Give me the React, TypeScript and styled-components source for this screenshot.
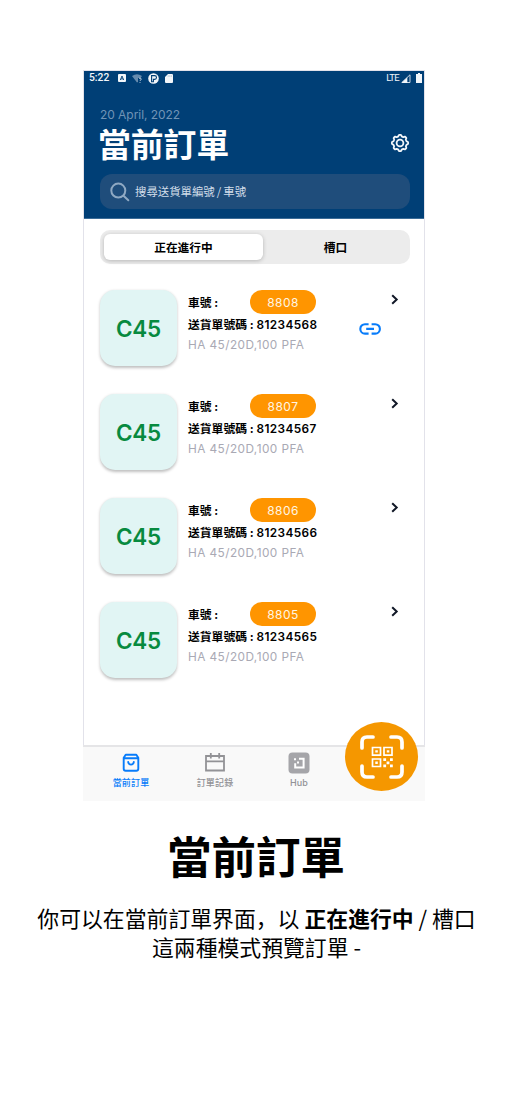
import React from "react";
import styled, { createGlobalStyle } from "styled-components";

const Global = createGlobalStyle`
  * { box-sizing: border-box; }
  body { margin: 0; background: #fff; font-family: Inter, "Noto Sans CJK SC", sans-serif; color: #000; }
`;
const Page = styled.main`
  width: 512px; height: 1108px; padding-top: 70px; overflow: hidden;
  display: flex; flex-direction: column; align-items: center; background: #fff;
`;
const Phone = styled.section`
  position: relative; width: 342px; height: 731px; margin-left: -4px;
  display: flex; flex-direction: column;
`;
const Screen = styled.div`
  height: 675px; border: 1px solid #e2e2ea; border-bottom: 0;
  display: flex; flex-direction: column;
`;
const Header = styled.header`
  height: 148px; background: #003f76; color: #fff; border-bottom: 1px solid #3a6c98;
  display: flex; flex-direction: column; flex: none;
`;
const Status = styled.div`
  height: 15px; padding: 0 2px 1px 5px; display: flex; align-items: center;
  font: 500 10px/14px Roboto, sans-serif; color: #f2f6fa;
  svg { display: block; }
`;
const Clock = styled.span` width: 29px; font-size: 10.3px; `;
const StatusIcons = styled.div` display: flex; align-items: center; gap: 5.5px; flex: 1; `;
const Signal = styled.div` display: flex; align-items: center; font-weight: 400; font-size: 9.5px; letter-spacing: -.7px; `;
const DateLine = styled.div`
  margin: 20px 0 0 16px; height: 16px; line-height: 17px;
  font-size: 12px; letter-spacing: -.05px; color: #7094b6;
`;
const TitleRow = styled.div`
  height: 42px; padding: 0 14px 0 14px; display: flex; justify-content: space-between; align-items: center;
`;
const Title = styled.h1`
  margin: 0; font: 700 32.8px/34px "Noto Sans CJK SC", sans-serif;
`;
const Search = styled.div`
  margin: 10px 14px 0 16px; height: 35px; border-radius: 12px; background: #1f4d7b;
  display: flex; align-items: center; padding-left: 9px; gap: 4px; color: #d3deea;
  font: 400 11.4px/37px "Noto Sans CJK SC", sans-serif; word-spacing: -.5px;
`;
const Segments = styled.div`
  flex: none; width: 310px; height: 34px; margin: 11px 0 0 16px; padding: 4px;
  border-radius: 10px; background: #ececec; display: flex;
`;
const Segment = styled.div<{ $active?: boolean }>`
  width: ${p => (p.$active ? 160 : 144)}px; border-radius: 6px; text-align: center;
  font: 700 11.7px/26px "Noto Sans CJK SC", sans-serif;
  background: ${p => (p.$active ? "#fff" : "transparent")};
  box-shadow: ${p => (p.$active ? "0 1px 4px rgba(0,0,0,.23)" : "none")};
  padding-left: ${p => (p.$active ? 0 : 2)}px;
`;
const List = styled.div` padding: 26px 0 0 16px; display: flex; flex-direction: column; gap: 28px; `;
const Row = styled.article` height: 76px; display: flex; `;
const Tile = styled.div`
  width: 77px; height: 76px; border-radius: 15px; background: #e1f5f4; color: #078a3f;
  box-shadow: 0 1.5px 3px rgba(0,0,0,.25); text-align: center;
  font: 600 22.5px/78px Inter, sans-serif; letter-spacing: -.3px;
`;
const Details = styled.div` width: 171px; margin-left: 11px; `;
const TruckLine = styled.div`
  height: 24px; display: flex; justify-content: space-between; padding-right: 43px;
  font: 700 11.7px/26px Inter, "Noto Sans CJK SC", sans-serif;
`;
const Pill = styled.span`
  width: 66px; height: 24px; border-radius: 12px; background: #ff9500; color: #fff5e4;
  text-align: center; font-weight: 400; font-size: 12px; line-height: 25px; letter-spacing: .45px;
`;
const NumberLine = styled.div`
  height: 21px; white-space: nowrap; font: 700 11.8px/23px Inter, "Noto Sans CJK SC", sans-serif;
  span { font-weight: 600; letter-spacing: .4px; }
`;
const Product = styled.div`
  height: 18px; font-size: 11.8px; line-height: 20px; letter-spacing: .44px; color: #a9a9b4; white-space: nowrap;
`;
const Actions = styled.div`
  width: 60px; display: flex; flex-direction: column; align-items: flex-start;
`;
const Chevron = styled.svg` width: 8px; height: 12px; margin: 4px 0 0 32px; `;
const LinkIcon = styled.svg` width: 22px; height: 12px; margin: 17px 0 0 0; `;
const TabBar = styled.nav`
  height: 56px; border-top: 2px solid #e5e5e7; background: #f9f9f9; display: flex; padding-left: 6px;
`;
const Tab = styled.div<{ $active?: boolean }>`
  width: 84px; padding-top: 5px; display: flex; flex-direction: column; align-items: center;
  color: ${p => (p.$active ? "#087cfa" : "#929296")};
  font: 500 9px/13px Inter, "Noto Sans CJK SC", sans-serif; letter-spacing: .15px;
  svg { height: 22px; margin-bottom: 2px; }
`;
const ScanButton = styled.div`
  position: absolute; left: 262px; top: 652px; width: 73px; height: 69px; border-radius: 50%;
  background: #f59700; display: flex; align-items: center; justify-content: center;
`;
const Caption = styled.h2`
  margin: 21px 0 0; height: 66px; font: 700 44.5px/66px "Noto Sans CJK SC", sans-serif;
`;
const Copy = styled.p`
  margin: 15px 0 0 1px; text-align: center; white-space: nowrap; font: 400 21.85px/29px "Noto Sans CJK SC", sans-serif;
`;

const gearPoints = () => {
  let d = "";
  for (let i = 0; i <= 96; i++) {
    const a = (i / 96) * Math.PI * 2;
    const r = 7.4 + 0.75 * Math.tanh(2.2 * Math.cos(8 * a));
    d += `${i ? "L" : "M"}${(10 + r * Math.sin(a)).toFixed(2)} ${(10 - r * Math.cos(a)).toFixed(2)}`;
  }
  return d + "Z";
};

const orders = ["8", "7", "6", "5"];

export default function App() {
  return (
    <Page>
      <Global />
      <Phone>
        <Screen>
          <Header>
            <Status>
              <Clock>5:22</Clock>
              <StatusIcons>
                <svg width="8" height="8" viewBox="0 0 8 8"><rect width="8" height="8" rx="1" fill="#f2f6fa" /><path d="M2.3 6 4 2l1.7 4M3 4.9h2" fill="none" stroke="#003f76" strokeWidth=".9" /></svg>
                <svg width="11" height="9" viewBox="0 0 11 9"><path d="M0 2Q5 -1.5 10 2L8.5 4H6v4L5 8.5Z" fill="#668bae" /><path d="M7 4.5q1-1 2 0t-1 2v.4M8 8v.8" fill="none" stroke="#bdcddd" /></svg>
                <svg width="11" height="11" viewBox="0 0 11 11"><circle cx="5.5" cy="5.5" r="5.3" fill="#f2f6fa" /><path d="M3.6 2.6h3a1.9 1.9 0 0 1 0 3.8H5.4v2.4H3.6Z" fill="none" stroke="#003f76" strokeWidth="1.1" /></svg>
                <svg width="8" height="9" viewBox="0 0 8 9"><path d="M3 0h4q1 0 1 1v7q0 1-1 1H1Q0 9 0 8V3Z" fill="#f2f6fa" /><path d="M3.2 1.4v1.4M4.8 1.4v1.4M6.4 1.4v1.4" stroke="#8eabc4" strokeWidth=".6" /></svg>
              </StatusIcons>
              <Signal>
                LTE
                <svg width="10" height="9" viewBox="0 0 10 9" style={{ marginLeft: 2 }}><path d="M.8 8.5 9 .8v7.7Z" fill="none" stroke="#c9d6e2" /><path d="M.5 9 6.3 3.2V9Z" fill="#f2f6fa" /></svg>
                <svg width="6" height="10" viewBox="0 0 6 10" style={{ marginLeft: 5 }}><path d="M2 0h2v1h2v9H0V1h2Z" fill="#f2f6fa" /></svg>
              </Signal>
            </Status>
            <DateLine>20 April, 2022</DateLine>
            <TitleRow>
              <Title>當前訂單</Title>
              <svg width="20" height="20" viewBox="0 0 20 20" fill="none" stroke="#f2f6fa" strokeWidth="1.8"><path d={gearPoints()} strokeLinejoin="round" /><circle cx="10" cy="10" r="3.4" /></svg>
            </TitleRow>
            <Search>
              <svg width="22" height="22" viewBox="0 0 22 22" fill="none" stroke="#8fa9c3" strokeWidth="2" strokeLinecap="round"><circle cx="9.3" cy="9.6" r="7" /><path d="m14.5 14.8 4.8 4.4" /></svg>
              搜尋送貨單編號 / 車號
            </Search>
          </Header>
          <Segments><Segment $active>正在進行中</Segment><Segment>槽口</Segment></Segments>
          <List>
            {orders.map((n, i) => (
              <Row key={n}>
                <Tile>C45</Tile>
                <Details>
                  <TruckLine>車號 :<Pill>880{n}</Pill></TruckLine>
                  <NumberLine>送貨單號碼 : <span>8123456{n}</span></NumberLine>
                  <Product>HA 45/20D,100 PFA</Product>
                </Details>
                <Actions>
                  <Chevron viewBox="0 0 8 12"><path d="m1.2 1.2 4.5 4.3-4.5 4.3" fill="none" stroke="#111827" strokeWidth="2" /></Chevron>
                  {i === 0 && (
                    <LinkIcon viewBox="0 0 22 12" fill="none" stroke="#087cfa" strokeWidth="2.1"><path d="M9.6 1.2H6a4.7 4.7 0 0 0 0 9.4h3.6M12.6 1.2h3.6a4.7 4.7 0 0 1 0 9.4h-3.6M7.2 5.9h7.8" /></LinkIcon>
                  )}
                </Actions>
              </Row>
            ))}
          </List>
        </Screen>
        <TabBar>
          <Tab $active>
            <svg width="20" viewBox="0 0 20 22" fill="none" stroke="currentColor" strokeWidth="1.9" strokeLinecap="round" strokeLinejoin="round"><path d="M2.7 5.8 4.7 2.7h10.6l2 3.1v11q0 2-2 2H4.7q-2 0-2-2ZM2.7 6.3h14.6M7.2 10q.3 2.6 2.8 2.6t2.8-2.6" /></svg>
            當前訂單
          </Tab>
          <Tab>
            <svg width="20" viewBox="0 0 20 22" fill="none" stroke="currentColor" strokeWidth="1.8"><path d="M1 4h18v14.5H1ZM1 9.3h18M5.8 1v5.5M14.2 1v5.5" /></svg>
            訂單記錄
          </Tab>
          <Tab>
            <svg width="22" viewBox="0 0 22 22"><rect x=".5" y=".5" width="21" height="21" rx="4" fill="#a5a5a9" /><path d="M11 6.8h4.6v8.8H7.2v-4.3" fill="none" stroke="#fff" strokeWidth="2" /><path d="M6 6.2h2v2H6ZM9 9.5h2v2H9Z" fill="#fff" /></svg>
            Hub
          </Tab>
        </TabBar>
        <ScanButton>
          <svg width="44" height="44" viewBox="0 0 44 44" fill="none" stroke="#fff">
            <path d="M2 13V7q0-5 5-5h6M31 2h6q5 0 5 5v6M42 31v6q0 5-5 5h-6M13 42H7q-5 0-5-5v-6" strokeWidth="3.7" strokeLinecap="round" />
            <path d="M12.5 12.5h8v7.7h-8ZM24 12.5h8v7.7h-8ZM12.5 24h8v7.5h-8Z" strokeWidth="1.7" />
            <path d="M15.3 15.2h2.5v2.4h-2.5ZM26.8 15.2h2.5v2.4h-2.5ZM15.3 26.5h2.5v2.4h-2.5ZM23.3 23.3h2.8v2.8h-2.8ZM30 23.3h2.8v2.8H30ZM26.6 26.4h2.8v2.8h-2.8ZM23.3 29.5h2.8v2.8h-2.8ZM30 29.5h2.8v2.8H30Z" fill="#fff" stroke="none" />
          </svg>
        </ScanButton>
      </Phone>
      <Caption>當前訂單</Caption>
      <Copy>你可以在當前訂單界面，以 <b>正在進行中</b> / 槽口<br />這兩種模式預覽訂單 -</Copy>
    </Page>
  );
}
